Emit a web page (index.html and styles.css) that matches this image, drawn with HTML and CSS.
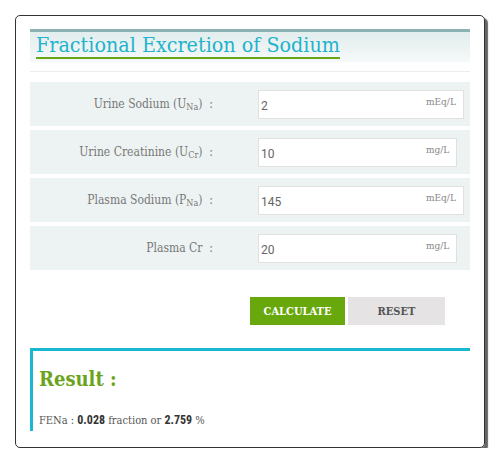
FILE: index.html
```html
<!DOCTYPE html>
<html lang="en">
<head>
<meta charset="UTF-8">
<meta name="viewport" content="width=device-width, initial-scale=1.0">
<title>Fractional Excretion of Sodium</title>
<link rel="stylesheet" href="styles.css">
</head>
<body>

<div class="card">
    <div class="calc-header">
        <h1>Fractional Excretion of Sodium</h1>
    </div>
    <div class="divider"></div>

    <form class="calc-form">
        <div class="row">
            <label>Urine Sodium (U<sub>Na</sub>)&nbsp;&nbsp;:</label>
            <div class="field">
                <input type="text" value="2">
                <span class="unit">mEq/L</span>
            </div>
        </div>
        <div class="row">
            <label>Urine Creatinine (U<sub>Cr</sub>)&nbsp;&nbsp;:</label>
            <div class="field">
                <input type="text" value="10">
                <span class="unit">mg/L</span>
            </div>
        </div>
        <div class="row">
            <label>Plasma Sodium (P<sub>Na</sub>)&nbsp;&nbsp;:</label>
            <div class="field">
                <input type="text" value="145">
                <span class="unit">mEq/L</span>
            </div>
        </div>
        <div class="row">
            <label>Plasma Cr&nbsp;&nbsp;:</label>
            <div class="field">
                <input type="text" value="20">
                <span class="unit">mg/L</span>
            </div>
        </div>

        <div class="buttons">
            <button type="button" class="btn-calc">CALCULATE</button>
            <button type="reset" class="btn-reset">RESET</button>
        </div>
    </form>

    <div class="result">
        <h2>Result :</h2>
        <p>FENa : <b>0.028</b> fraction or <b>2.759</b> %</p>
    </div>
</div>

</body>
</html>
```
FILE: styles.css
```css
body {
    font-family: "DejaVu Serif", serif;
    font-stretch: semi-condensed;
    margin: 0;
    padding: 0;
    background: #fff;
}
.card {
    width: 440px;
    margin: 15px 0 0 15px;
    padding: 13px 14px 16px 14px;
    border: 1px solid #333;
    border-radius: 5px;
    box-shadow: 3px 3px 1px #666;
}
.calc-header {
    border-top: 3px solid #8db0b3;
    background: linear-gradient(#e2eded, #f6f9f9);
    height: 30px;
    padding-left: 6px;
}
.calc-header h1 {
    display: inline-block;
    margin: 0;
    font-size: 21.3px;
    font-weight: normal;
    color: #1fb3cc;
    line-height: 25px;
    border-bottom: 2px solid #6aa61a;
}
.divider {
    height: 1px;
    background: #ececec;
    margin: 9px 0 10px;
}
.row {
    display: flex;
    align-items: center;
    height: 44px;
    margin-bottom: 4px;
    background: #edf3f3;
}
.row label {
    width: 183px;
    text-align: right;
    font-size: 12px;
    color: #777;
}
.row sub {
    font-size: 9px;
    vertical-align: -2px;
}
.field {
    display: flex;
    margin-left: 45px;
    height: 29px;
}
.field input {
    width: 158px;
    border: 1px solid #e0e0e0;
    border-right: none;
    padding: 4px 0 0 2px;
    font-family: "Roboto", sans-serif;
    font-size: 12px;
    color: #666;
    outline: none;
}
.unit {
    background: #fff;
    border: 1px solid #e0e0e0;
    border-left: none;
    padding: 5px 7px 0 7px;
    font-size: 10px;
    color: #888;
}
.buttons {
    display: flex;
    gap: 3px;
    padding-left: 220px;
    margin-top: 27px;
}
.buttons button {
    height: 28px;
    border: none;
    font-family: "DejaVu Serif", serif;
    font-stretch: semi-condensed;
    font-size: 11px;
    font-weight: bold;
    cursor: pointer;
}
.btn-calc {
    width: 95px;
    background: #68a80c;
    color: #fff;
}
.btn-reset {
    width: 97px;
    background: #e5e3e3;
    color: #555;
}
.result {
    margin-top: 23px;
    border-top: 3px solid #1ab7d2;
    border-left: 3px solid #1ab7d2;
    padding: 16px 0 4px 6px;
}
.result h2 {
    margin: 0 0 22px;
    font-size: 20px;
    color: #6ba41c;
}
.result p {
    margin: 0;
    font-size: 11px;
    color: #555;
}
.result b {
    font-family: "Roboto", sans-serif;
    color: #333;
    font-size: 12px;
}
```
